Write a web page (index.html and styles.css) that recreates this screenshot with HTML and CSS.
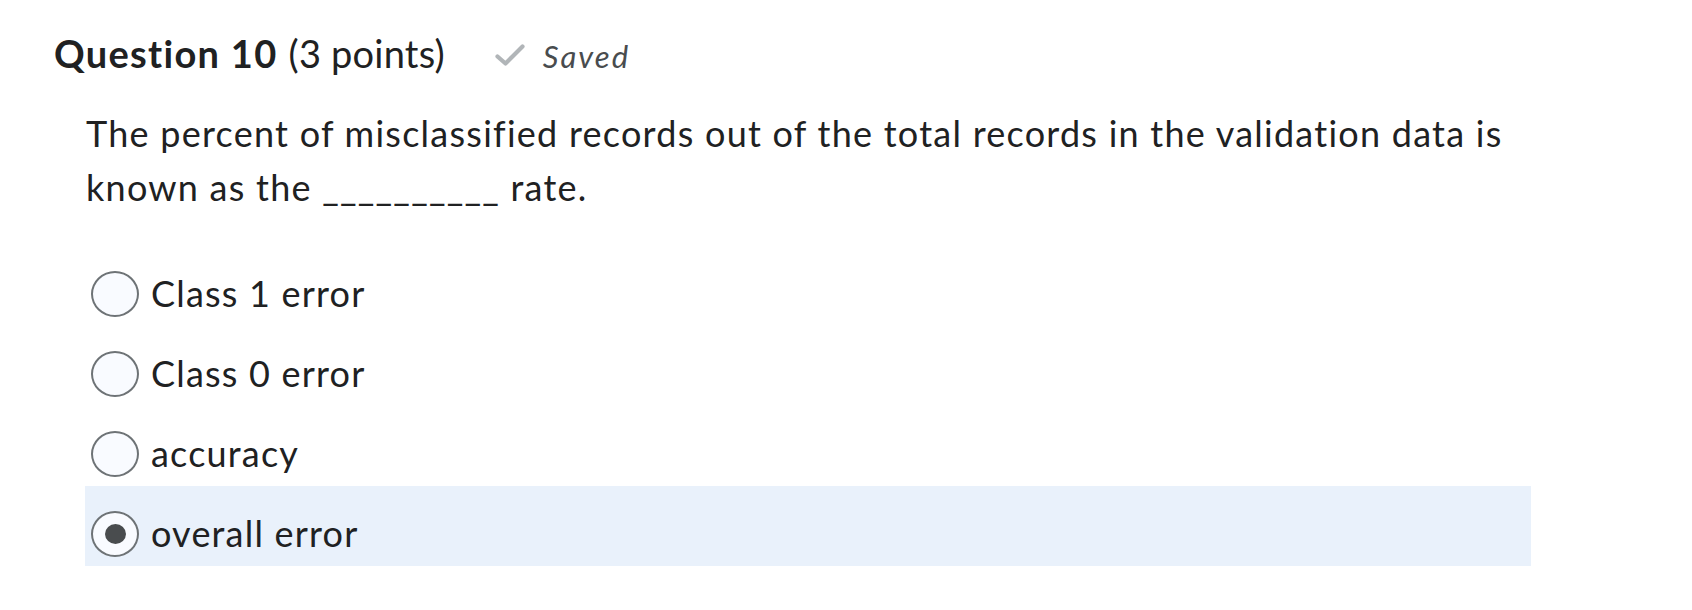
FILE: index.html
```html
<!DOCTYPE html>
<html lang="en">
<head>
<meta charset="utf-8">
<title>Question 10</title>
<link rel="stylesheet" href="styles.css">
</head>
<body>
<div class="question">
  <div class="q-header">
    <h2 class="q-title"><strong>Question 10</strong> <span class="points">(3 points)</span></h2>
    <span class="saved">
      <svg class="check" width="30" height="22" viewBox="0 0 30 22" aria-hidden="true">
        <path d="M2.5 12.5 L10.5 19.5 L27.5 2.5" fill="none" stroke="#b1b5b8" stroke-width="4.2" stroke-linecap="round" stroke-linejoin="round"/>
      </svg>
      <em>Saved</em>
    </span>
  </div>
  <div class="q-body">
    <p class="q-text">The percent of misclassified records out of the total records in the validation data is known as the __________ rate.</p>
    <div class="options">
      <label class="option"><span class="radio"></span><span class="opt-label">Class 1 error</span></label>
      <label class="option"><span class="radio"></span><span class="opt-label">Class 0 error</span></label>
      <label class="option"><span class="radio"></span><span class="opt-label">accuracy</span></label>
      <label class="option selected"><span class="radio checked"></span><span class="opt-label">overall error</span></label>
    </div>
  </div>
</div>
</body>
</html>
```
FILE: styles.css
```css
html, body {
  margin: 0;
  padding: 0;
  background: #ffffff;
}

body {
  font-family: Lato, "Open Sans", "Liberation Sans", sans-serif;
  color: #202122;
  font-variant-ligatures: none;
  font-feature-settings: "liga" 0, "clig" 0;
}

.question {
  padding: 31px 0 0 54px;
}

.q-header {
  display: flex;
  align-items: baseline;
}

.q-title {
  margin: 0;
  font-size: 38px;
  font-weight: 400;
  line-height: 1.2;
  letter-spacing: 1.3px;
  color: #202122;
}

.q-title strong {
  font-weight: 700;
}

.q-title .points {
  letter-spacing: 0.2px;
}

.saved {
  display: inline-flex;
  align-items: center;
  margin-left: 50px;
  color: #494c4e;
  font-size: 31px;
  line-height: 1.2;
  letter-spacing: 2px;
}

.saved em {
  font-style: italic;
  margin-left: 18px;
}

.check {
  display: block;
  position: relative;
  top: -2px;
}

.q-body {
  width: 1446px;
  margin-left: 31px;
}

.q-text {
  margin: 29px 0 0 1px;
  font-size: 36px;
  line-height: 54px;
  letter-spacing: 1.25px;
}

.options {
  margin-top: 32px;
  display: flex;
  flex-direction: column;
}

.option {
  display: flex;
  align-items: center;
  height: 80px;
  box-sizing: border-box;
  padding: 16px 0 0 6px;
  font-size: 36px;
  letter-spacing: 1.2px;
}

.option.selected {
  background: #e9f1fb;
}

.radio {
  flex: none;
  width: 48px;
  height: 46px;
  box-sizing: border-box;
  border: 2px solid #6e7376;
  border-radius: 50%;
  background: #f9fbff;
  display: flex;
  align-items: center;
  justify-content: center;
}

.radio.checked::after {
  content: "";
  width: 21px;
  height: 20px;
  border-radius: 50%;
  background: #494c4e;
}

.opt-label {
  margin-left: 12px;
  line-height: 1.2;
}
```
